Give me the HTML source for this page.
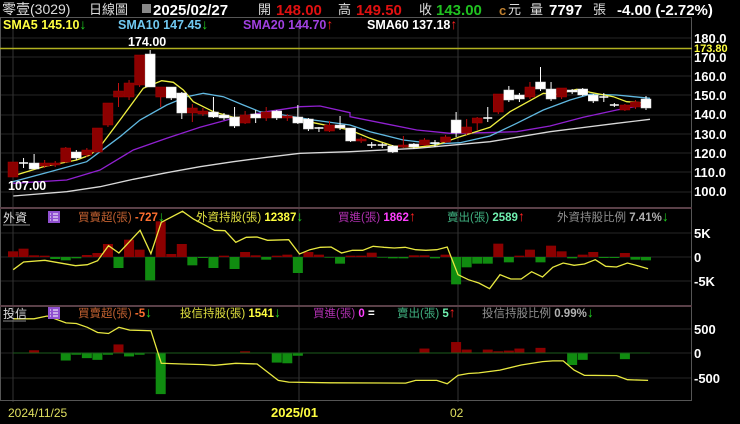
<!DOCTYPE html><html><head><meta charset="utf-8"><style>
html,body{margin:0;padding:0;background:#000;width:740px;height:424px;overflow:hidden}
svg{display:block}
text{font-family:"Liberation Sans","Noto Sans CJK TC",sans-serif}
.b{font-weight:bold}
.a{font-size:14px;font-weight:bold}
</style></head><body>
<svg id="s" width="740" height="424" xmlns="http://www.w3.org/2000/svg">
<rect width="740" height="424" fill="#000"/>
<g id="grid"></g>
<g id="draw"></g>
<!-- header -->
<text x="2" y="14" font-size="14" fill="#ddd" font-family="Liberation Serif,Noto Serif CJK SC,serif">零壹(3029)</text>
<text x="89" y="14" font-size="13" fill="#ddd">日線圖</text>
<rect x="142" y="4" width="9" height="9" fill="#888"/>
<text x="153" y="15" font-size="15" class="b" fill="#fff">2025/02/27</text>
<text x="258" y="14" font-size="13" fill="#ddd">開</text>
<text x="276" y="15" font-size="15" class="b" fill="#e01010">148.00</text>
<text x="338" y="14" font-size="13" fill="#ddd">高</text>
<text x="356" y="15" font-size="15" class="b" fill="#e01010">149.50</text>
<text x="419" y="14" font-size="13" fill="#ddd">收</text>
<text x="436" y="15" font-size="15" class="b" fill="#20c020">143.00</text>
<text x="499" y="15" font-size="13" class="b" fill="#c08030">c</text>
<text x="508" y="14" font-size="13" fill="#ddd">元</text>
<text x="530" y="14" font-size="13" fill="#ddd">量</text>
<text x="549" y="15" font-size="15" class="b" fill="#fff">7797</text>
<text x="593" y="14" font-size="13" fill="#ddd">張</text>
<text x="617" y="15" font-size="15" class="b" fill="#fff">-4.00 (-2.72%)</text>
<text x="3" y="29" font-size="12.5" class="b" fill="#ffff40">SMA5 145.10<tspan class="a" fill="#20d020">↓</tspan></text>
<text x="118" y="29" font-size="12.5" class="b" fill="#70c8f0">SMA10 147.45<tspan class="a" fill="#20d020">↓</tspan></text>
<text x="243" y="29" font-size="12.5" class="b" fill="#a040e0">SMA20 144.70<tspan class="a" fill="#ff2020">↑</tspan></text>
<text x="367" y="29" font-size="12.5" class="b" fill="#fff">SMA60 137.18<tspan class="a" fill="#ff2020">↑</tspan></text>
<text x="128" y="46" font-size="12.5" class="b" fill="#fff">174.00</text>
<text x="8" y="190" font-size="12.5" class="b" fill="#fff">107.00</text>
<!-- panel headers -->
<text x="3" y="222" font-size="12" fill="#ddd">外資</text>
<line x1="3" y1="225" x2="30" y2="225" stroke="#888"/>
<rect x="48" y="211" width="12" height="12" fill="#9050d0"/>
<path d="M50 214h1M53 214h5M50 217h1M53 217h5M50 220h1M53 220h5" stroke="#fff" stroke-width="1"/>
<text x="78" y="221" font-size="11.5" fill="#c06030">買賣超(張) <tspan class="b" fill="#ff7030">-727</tspan><tspan class="a" fill="#20d020">↓</tspan></text>
<text x="196" y="221" font-size="11.5" fill="#e0e040">外資持股(張) <tspan class="b" fill="#ffff40">12387</tspan><tspan class="a" fill="#20d020">↓</tspan></text>
<text x="338" y="221" font-size="11.5" fill="#b030b0">買進(張) <tspan class="b" fill="#ff40ff">1862</tspan><tspan class="a" fill="#ff2020">↑</tspan></text>
<text x="447" y="221" font-size="11.5" fill="#40b080">賣出(張) <tspan class="b" fill="#70f0b0">2589</tspan><tspan class="a" fill="#ff2020">↑</tspan></text>
<text x="557" y="221" font-size="11.5" fill="#909090">外資持股比例 <tspan class="b" fill="#b0b0b0">7.41%</tspan><tspan class="a" fill="#20d020">↓</tspan></text>
<text x="3" y="318" font-size="12" fill="#ddd">投信</text>
<line x1="3" y1="321" x2="26" y2="321" stroke="#888"/>
<rect x="48" y="307" width="12" height="12" fill="#9050d0"/>
<path d="M50 310h1M53 310h5M50 313h1M53 313h5M50 316h1M53 316h5" stroke="#fff" stroke-width="1"/>
<text x="78" y="317" font-size="11.5" fill="#c06030">買賣超(張) <tspan class="b" fill="#ff7030">-5</tspan><tspan class="a" fill="#20d020">↓</tspan></text>
<text x="180" y="317" font-size="11.5" fill="#e0e040">投信持股(張) <tspan class="b" fill="#ffff40">1541</tspan><tspan class="a" fill="#20d020">↓</tspan></text>
<text x="313" y="317" font-size="11.5" fill="#b030b0">買進(張) <tspan class="b" fill="#ff40ff">0</tspan> <tspan class="b" fill="#fff">=</tspan></text>
<text x="397" y="317" font-size="11.5" fill="#40b080">賣出(張) <tspan class="b" fill="#70f0b0">5</tspan><tspan class="a" fill="#ff2020">↑</tspan></text>
<text x="482" y="317" font-size="11.5" fill="#909090">投信持股比例 <tspan class="b" fill="#b0b0b0">0.99%</tspan><tspan class="a" fill="#20d020">↓</tspan></text>
<!-- right axis -->
<g font-size="13" class="b" fill="#fff">
<text x="694" y="43">180.0</text><text x="694" y="62">170.0</text><text x="694" y="81">160.0</text><text x="694" y="100">150.0</text><text x="694" y="119">140.0</text><text x="694" y="139">130.0</text><text x="694" y="158">120.0</text><text x="694" y="177">110.0</text><text x="694" y="196">100.0</text>
<text x="694" y="238">5K</text><text x="694" y="262">0</text><text x="694" y="286">-5K</text>
<text x="694" y="334">500</text><text x="694" y="358">0</text><text x="694" y="383">-500</text>
</g>
<text x="694" y="52" font-size="11" class="b" fill="#ffff40">173.80</text>
<text x="8" y="417" font-size="12" fill="#e0e060">2024/11/25</text>
<text x="271" y="417" font-size="13" class="b" fill="#ffff40">2025/01</text>
<text x="450" y="417" font-size="12" fill="#e0e060">02</text>
</svg>
<script>
var NS="http://www.w3.org/2000/svg",D=document.getElementById('draw'),G=document.getElementById('grid');
function el(p,t,a){var e=document.createElementNS(NS,t);for(var k in a)e.setAttribute(k,a[k]);p.appendChild(e);return e}
var X=function(i){return 13+i*10.55};
[38,57,76,95,115,134,153,172,192].forEach(function(y){el(G,'line',{x1:0,y1:y,x2:692,y2:y,stroke:'#262626'})});
[233,257,281,329,353,378].forEach(function(y){el(G,'line',{x1:0,y1:y,x2:692,y2:y,stroke:'#262626'})});
[13,299,458].forEach(function(x){el(G,'line',{x1:x,y1:18,x2:x,y2:402,stroke:'#333'})});
el(G,'rect',{x:0.5,y:17.5,width:691,height:383,fill:'none',stroke:'#555'});
[208,306].forEach(function(y){el(G,'line',{x1:0,y1:y,x2:692,y2:y,stroke:'#5a4048','stroke-width':2})});
el(G,'line',{x1:0,y1:48.5,x2:692,y2:48.5,stroke:'#b0b020','stroke-width':1.5});
var C=[[162,177,162,177,'r'],[163,163,158,168,'x'],[163,169,154,169,'w'],[163,166,160,168,'r'],[163,165,161,167,'r'],[148,162,147,163,'r'],[152,158,150,160,'w'],[150,155,148,157,'r'],[128,152,128,152,'r'],[103,125,103,127,'r'],[91,97,83,107,'r'],[83,97,80,100,'r'],[55,85,55,87,'r'],[54,87,50,87,'w'],[87,97,87,107,'r'],[87,98,87,100,'w'],[93,113,92,119,'w'],[108,113,104,122,'r'],[111,114,108,116,'r'],[112,117,97,118,'w'],[115,118,113,120,'w'],[117,126,107,128,'w'],[115,123,111,124,'r'],[114,118,110,123,'w'],[112,118,107,121,'r'],[111,118,110,120,'w'],[116,118,114,121,'r'],[117,123,105,124,'w'],[119,129,118,131,'w'],[128,130,127,132,'x'],[125,131,121,132,'r'],[125,128,116,130,'w'],[128,141,128,142,'w'],[139,141,137,143,'r'],[145,145,142,148,'x'],[145,145,143,148,'x'],[146,152,145,153,'w'],[145,147,136,148,'r'],[144,147,143,149,'w'],[140,145,138,146,'r'],[143,143,140,147,'x'],[137,142,135,143,'r'],[120,133,112,137,'w'],[127,133,119,135,'r'],[118,123,117,130,'r'],[118,118,107,122,'x'],[94,112,94,114,'r'],[90,100,86,102,'w'],[95,99,93,102,'w'],[87,97,82,99,'r'],[82,89,67,91,'w'],[89,99,82,101,'w'],[88,97,88,99,'r'],[90,92,89,94,'w'],[89,95,88,96,'w'],[95,101,94,103,'w'],[97,97,93,102,'x'],[105,105,103,107,'x'],[105,110,104,111,'r'],[102,107,100,109,'r'],[99,108,96,110,'w']];
function poly(pts,col,sx,sy,ox,oy){var s=pts.map(function(p){return (ox+p[0]/sx).toFixed(1)+','+(oy+p[1]/sy).toFixed(1)}).join(' ');el(D,'polyline',{points:s,fill:'none',stroke:col,'stroke-width':1.3})}
var z4=function(a){return a.map(function(p){return [p[0]/3,40+p[1]/3]})},z5=function(a){return a.map(function(p){return [350+p[0]/3,40+p[1]/3]})};
function ma(a,b,col){poly(z4(a).concat(z5(b)),col,1,1,0,0)}
ma([[40,468],[200,455],[300,440],[400,418],[500,398],[600,380],[700,365],[800,352],[900,340],[1050,335]],[[0,335],[200,325],[420,305],[600,275],[800,250],[900,238]],'#d8d8d8');
ma([[40,430],[200,420],[300,390],[400,330],[500,295],[600,262],[700,235],[800,215],[900,200],[960,198],[1050,218]],[[0,230],[100,250],[200,270],[300,280],[400,278],[500,275],[600,258],[700,232],[800,210],[900,192]],'#9020d0');
ma([[38,425],[150,395],[260,365],[300,335],[360,290],[420,240],[500,195],[560,170],[610,160],[670,170],[730,195],[780,215],[850,225],[940,240],[1050,255]],[[0,255],[60,275],[160,300],[260,312],[330,308],[420,288],[500,250],[580,210],[660,180],[720,163],[800,165],[900,175]],'#60b8e0');
ma([[38,408],[130,380],[230,360],[270,345],[300,320],[360,240],[430,145],[485,122],[520,127],[550,150],[580,185],[640,215],[700,232],[800,232],[870,230],[940,248],[1050,270]],[[0,270],[60,295],[130,318],[200,322],[260,315],[330,290],[420,262],[480,215],[580,160],[620,163],[680,148],[720,157],[790,170],[830,185],[900,190]],'#f0f040');
C.forEach(function(c,i){var x=X(i);var col=c[4]=='r'?'#8c0000':'#ffffff';
 el(D,'line',{x1:x,y1:c[2],x2:x,y2:c[3],stroke:c[4]=='r'?'#c01010':'#fff','stroke-width':1});
 if(c[4]=='x')el(D,'line',{x1:x-4.5,y1:c[0],x2:x+4.5,y2:c[0],stroke:'#fff','stroke-width':1.5});
 else el(D,'rect',{x:x-5,y:c[0],width:10,height:Math.max(1.5,c[1]-c[0]),fill:col,stroke:c[4]=='r'?'#a00':'#ddd','stroke-width':0.5});
});
var F=[17,25,5,4,-6,-10,-4,6,12,39,-33,52,22,-70,107,9,39,-25,-3,-33,4,-36,15,5,-8,4,7,-48,15,7,-2,-20,4,4,13,-2,-4,-4,5,5,-4,7,-82,-31,-20,-20,40,-16,4,22,-16,34,17,-4,7,15,-3,-3,12,-8,-10];
F.forEach(function(v,i){var h=v/3,x=X(i);el(D,'rect',{x:x-5,y:v>0?257-h:257,width:10,height:Math.abs(h),fill:v>0?'#8c0000':'#108c10'})});
var FL=[[28,210],[50,187],[95,182],[160,198],[185,195],[207,183],[230,138],[252,160],[297,92],[320,162],[342,68],[387,35],[410,58],[455,92],[477,93],[500,128],[522,113],[545,112],[567,122],[612,120],[635,163],[657,150],[679,143],[702,142],[724,160],[747,152],[769,152],[791,140],[814,143],[836,145],[859,143],[881,150],[903,152],[926,150],[948,142],[971,225],[993,240],[1015,250],[1038,267],[1060,225],[1083,238],[1105,238],[1127,216],[1150,232],[1172,203],[1194,190],[1217,197],[1239,193],[1262,180],[1284,200],[1307,202],[1330,190],[1352,198],[1374,207]];
poly(FL.map(function(p){return [p[0],p[1]-172]}),'#e8e840',2.12,3,0,257);
var T={2:8,5:-22,6:-5,7:-15,8:-20,9:-5,10:25,11:-10,12:-5,14:-120,22:5,25:-28,26:-30,27:-8,39:13,42:32,43:10,45:10,46:5,47:7,48:13,50:15,53:-35,54:-20,58:-18};
for(var k in T){var v=T[k],h=v/2.92,x=X(+k);el(D,'rect',{x:x-5,y:v>0?353-h:353,width:10,height:Math.abs(h),fill:v>0?'#8c0000':'#108c10'})}
el(D,'line',{x1:13,y1:353,x2:650,y2:353,stroke:'#1c5c1c','stroke-width':1});
var TL=[[28,60],[72,60],[100,52],[140,72],[162,74],[185,85],[207,100],[230,103],[252,85],[275,93],[320,95],[342,190],[387,192],[432,194],[455,196],[500,190],[545,192],[590,240],[612,245],[700,247],[860,248],[881,240],[926,240],[948,250],[971,225],[993,220],[1015,218],[1060,210],[1105,195],[1150,185],[1172,183],[1194,183],[1217,210],[1239,225],[1307,226],[1330,238],[1374,240]];
poly(TL.map(function(p){return [p[0],p[1]-160]}),'#e8e840',2.12,2.92,0,353);
</script>
</body></html>
